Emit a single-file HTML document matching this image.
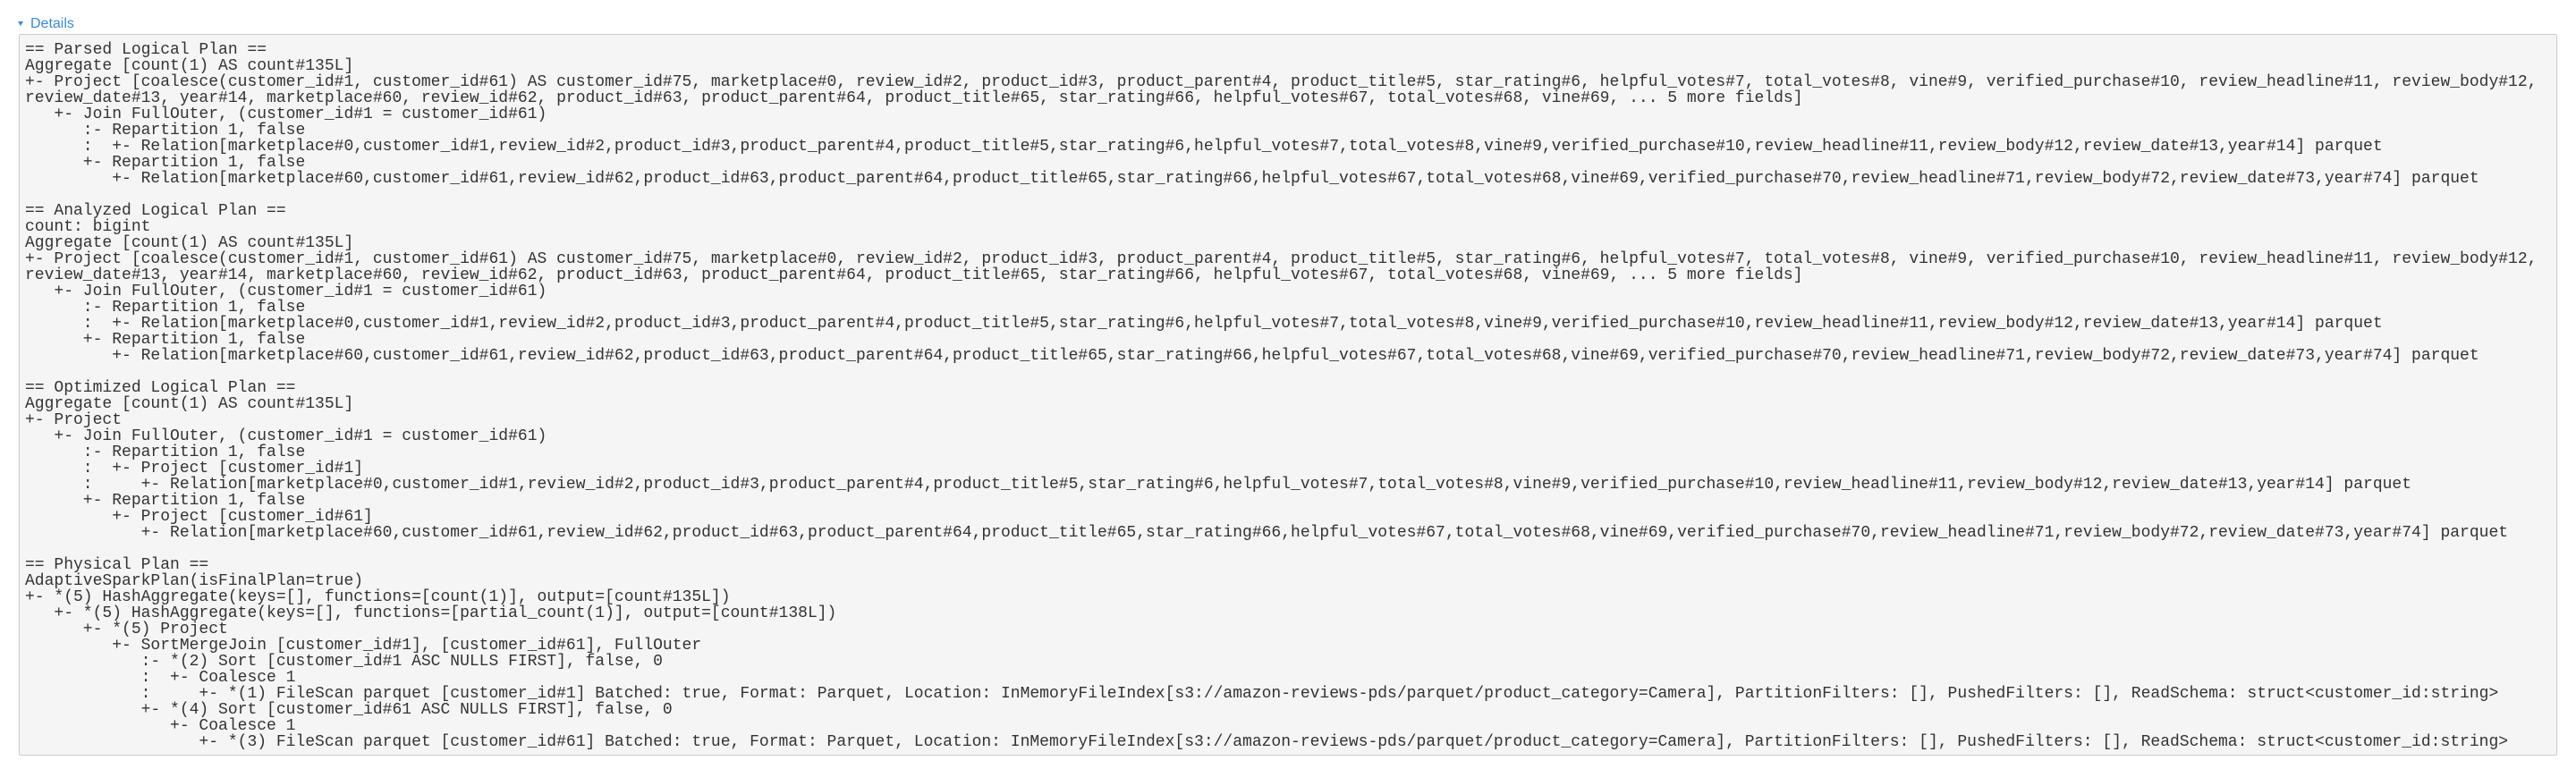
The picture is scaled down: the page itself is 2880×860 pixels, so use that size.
<!DOCTYPE html>
<html><head><meta charset="utf-8"><style>
html,body{margin:0;padding:0;background:#fff;width:2880px;height:860px;overflow:hidden}
.det{position:absolute;left:20px;top:17px;font-family:"Liberation Sans",sans-serif;font-size:16px;color:#3a8ad0;line-height:20px}
.tri{display:inline-block;width:0;height:0;border-left:3.5px solid transparent;border-right:3.5px solid transparent;border-top:5px solid #3a8ad0;margin-right:8px;vertical-align:2px}
pre{position:absolute;left:21px;top:38px;width:2838px;height:807px;margin:0;box-sizing:border-box;border:1px solid #ccc;border-radius:2px;background:#f5f5f5;padding:8px 0 0 6px;font-family:"Liberation Mono",monospace;font-size:18px;line-height:18px;color:#333;white-space:pre;overflow:hidden}
</style></head><body>
<div class="det"><span class="tri"></span>Details</div>
<pre>== Parsed Logical Plan ==
Aggregate [count(1) AS count#135L]
+- Project [coalesce(customer_id#1, customer_id#61) AS customer_id#75, marketplace#0, review_id#2, product_id#3, product_parent#4, product_title#5, star_rating#6, helpful_votes#7, total_votes#8, vine#9, verified_purchase#10, review_headline#11, review_body#12,
review_date#13, year#14, marketplace#60, review_id#62, product_id#63, product_parent#64, product_title#65, star_rating#66, helpful_votes#67, total_votes#68, vine#69, ... 5 more fields]
   +- Join FullOuter, (customer_id#1 = customer_id#61)
      :- Repartition 1, false
      :  +- Relation[marketplace#0,customer_id#1,review_id#2,product_id#3,product_parent#4,product_title#5,star_rating#6,helpful_votes#7,total_votes#8,vine#9,verified_purchase#10,review_headline#11,review_body#12,review_date#13,year#14] parquet
      +- Repartition 1, false
         +- Relation[marketplace#60,customer_id#61,review_id#62,product_id#63,product_parent#64,product_title#65,star_rating#66,helpful_votes#67,total_votes#68,vine#69,verified_purchase#70,review_headline#71,review_body#72,review_date#73,year#74] parquet

== Analyzed Logical Plan ==
count: bigint
Aggregate [count(1) AS count#135L]
+- Project [coalesce(customer_id#1, customer_id#61) AS customer_id#75, marketplace#0, review_id#2, product_id#3, product_parent#4, product_title#5, star_rating#6, helpful_votes#7, total_votes#8, vine#9, verified_purchase#10, review_headline#11, review_body#12,
review_date#13, year#14, marketplace#60, review_id#62, product_id#63, product_parent#64, product_title#65, star_rating#66, helpful_votes#67, total_votes#68, vine#69, ... 5 more fields]
   +- Join FullOuter, (customer_id#1 = customer_id#61)
      :- Repartition 1, false
      :  +- Relation[marketplace#0,customer_id#1,review_id#2,product_id#3,product_parent#4,product_title#5,star_rating#6,helpful_votes#7,total_votes#8,vine#9,verified_purchase#10,review_headline#11,review_body#12,review_date#13,year#14] parquet
      +- Repartition 1, false
         +- Relation[marketplace#60,customer_id#61,review_id#62,product_id#63,product_parent#64,product_title#65,star_rating#66,helpful_votes#67,total_votes#68,vine#69,verified_purchase#70,review_headline#71,review_body#72,review_date#73,year#74] parquet

== Optimized Logical Plan ==
Aggregate [count(1) AS count#135L]
+- Project
   +- Join FullOuter, (customer_id#1 = customer_id#61)
      :- Repartition 1, false
      :  +- Project [customer_id#1]
      :     +- Relation[marketplace#0,customer_id#1,review_id#2,product_id#3,product_parent#4,product_title#5,star_rating#6,helpful_votes#7,total_votes#8,vine#9,verified_purchase#10,review_headline#11,review_body#12,review_date#13,year#14] parquet
      +- Repartition 1, false
         +- Project [customer_id#61]
            +- Relation[marketplace#60,customer_id#61,review_id#62,product_id#63,product_parent#64,product_title#65,star_rating#66,helpful_votes#67,total_votes#68,vine#69,verified_purchase#70,review_headline#71,review_body#72,review_date#73,year#74] parquet

== Physical Plan ==
AdaptiveSparkPlan(isFinalPlan=true)
+- *(5) HashAggregate(keys=[], functions=[count(1)], output=[count#135L])
   +- *(5) HashAggregate(keys=[], functions=[partial_count(1)], output=[count#138L])
      +- *(5) Project
         +- SortMergeJoin [customer_id#1], [customer_id#61], FullOuter
            :- *(2) Sort [customer_id#1 ASC NULLS FIRST], false, 0
            :  +- Coalesce 1
            :     +- *(1) FileScan parquet [customer_id#1] Batched: true, Format: Parquet, Location: InMemoryFileIndex[s3://amazon-reviews-pds/parquet/product_category=Camera], PartitionFilters: [], PushedFilters: [], ReadSchema: struct&lt;customer_id:string&gt;
            +- *(4) Sort [customer_id#61 ASC NULLS FIRST], false, 0
               +- Coalesce 1
                  +- *(3) FileScan parquet [customer_id#61] Batched: true, Format: Parquet, Location: InMemoryFileIndex[s3://amazon-reviews-pds/parquet/product_category=Camera], PartitionFilters: [], PushedFilters: [], ReadSchema: struct&lt;customer_id:string&gt;</pre>
</body></html>
